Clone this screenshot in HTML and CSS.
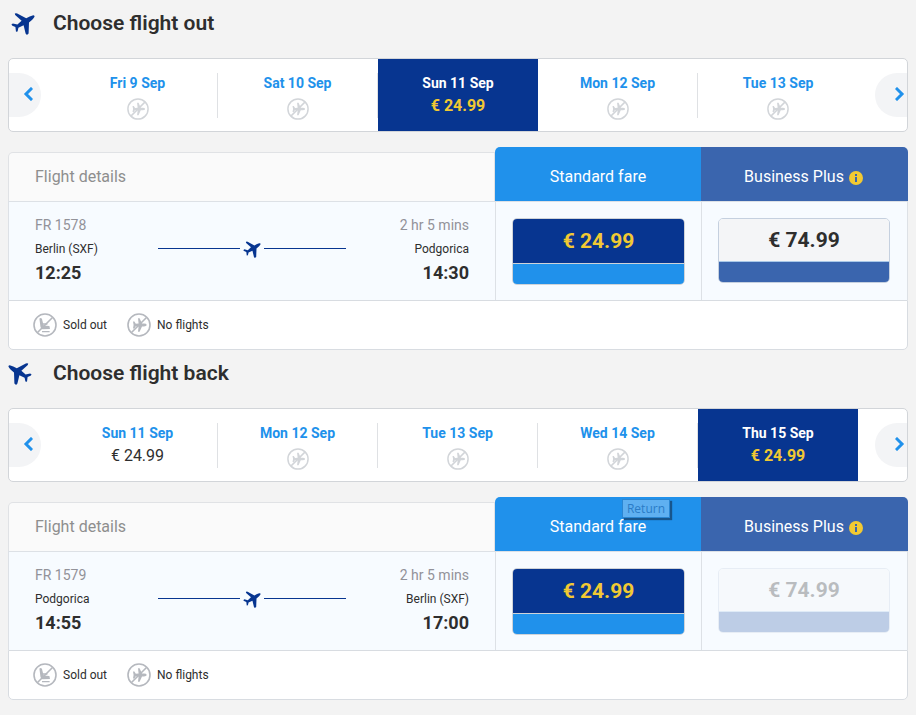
FILE: index.html
```html
<!DOCTYPE html>
<html lang="en">
<head>
    <meta charset="UTF-8">
    <meta name="viewport" content="width=device-width, initial-scale=1.0">
    <title>Choose flights</title>
    <link rel="stylesheet" href="styles.css">
</head>
<body>
    <!-- shared icons -->
    <svg class="sprite" aria-hidden="true">
        <symbol id="plane" viewBox="0 0 24 24">
            <path d="M23.6 5.4Q23.4 4.2 21.6 4.4Q19 4.8 15.2 7.2L6.2 2.4Q4.8 1.8 3.8 2.6L4.2 4L10.6 9.8L6.4 13.6L1.8 12.4L.4 13.6L1.4 14.8L4.4 16L5 20.8L6.6 20.4L7.4 16.8L12.6 14.2L14.6 22.6Q15.2 23.8 16.2 23.8L17.6 22.6L18 11.4Q22.6 8 23.6 5.4Z"/>
        </symbol>
        <symbol id="no-flights" viewBox="0 0 24 24">
            <circle cx="12" cy="12" r="11" fill="none" stroke="currentColor" stroke-width="1.6"/>
            <path d="M4.5 19.5L19.5 4.5" fill="none" stroke="currentColor" stroke-width="1.6"/>
            <path fill="currentColor" d="M19.8 12Q19.4 10.6 17 10.6L15 10.6L12.6 5.2L11 5.2L11.6 10.6L8.8 10.8L7.4 8.6L6 8.6L6.6 12L6 15.4L7.4 15.4L8.8 13.2L11.6 13.4L11 18.8L12.6 18.8L15 13.4L17 13.4Q19.4 13.4 19.8 12Z"/>
        </symbol>
        <symbol id="sold-out" viewBox="0 0 24 24">
            <circle cx="12" cy="12" r="11" fill="none" stroke="currentColor" stroke-width="1.6"/>
            <path d="M4.5 19.5L19.5 4.5" fill="none" stroke="currentColor" stroke-width="1.6"/>
            <path fill="currentColor" d="M6.4 5.6Q8 4.4 9 6L10.6 12.6L16.4 13L17 16L9.4 16.2Q7.6 15.8 7.4 13.6Z"/>
            <path d="M10 11H14.4M9 18.6H16.6" fill="none" stroke="currentColor" stroke-width="1.4"/>
        </symbol>
    </svg>

    <!-- outbound flight -->
    <section class="flight">
        <h2 class="title">
            <svg class="title_icon"><use href="#plane"/></svg>
            Choose flight out
        </h2>

        <div class="dates">
            <button class="arrow arrow_left" type="button" aria-label="Previous days">
                <svg viewBox="0 0 10 14"><path d="M8 2L3 7L8 12"/></svg>
            </button>
            <button class="date" type="button">
                <span class="day">Fri 9 Sep</span>
                <svg class="none"><use href="#no-flights"/></svg>
            </button>
            <button class="date" type="button">
                <span class="day">Sat 10 Sep</span>
                <svg class="none"><use href="#no-flights"/></svg>
            </button>
            <button class="date active" type="button">
                <span class="day">Sun 11 Sep</span>
                <span class="from">€ 24.99</span>
            </button>
            <button class="date" type="button">
                <span class="day">Mon 12 Sep</span>
                <svg class="none"><use href="#no-flights"/></svg>
            </button>
            <button class="date" type="button">
                <span class="day">Tue 13 Sep</span>
                <svg class="none"><use href="#no-flights"/></svg>
            </button>
            <button class="arrow arrow_right" type="button" aria-label="Next days">
                <svg viewBox="0 0 10 14"><path d="M2 2L7 7L2 12"/></svg>
            </button>
        </div>

        <div class="fares">
            <div class="head head_details">Flight details</div>
            <div class="head head_standard">Standard fare</div>
            <div class="head head_business">
                Business Plus
                <svg class="info" viewBox="0 0 14 14"><circle cx="7" cy="7" r="7"/><path d="M6 3H8V5H6ZM6 6H8V11H6Z"/></svg>
            </div>

            <div class="details">
                <div class="stop">
                    <span class="grey">FR 1578</span>
                    <span class="city">Berlin (SXF)</span>
                    <strong class="time">12:25</strong>
                </div>
                <div class="route"><svg><use href="#plane"/></svg></div>
                <div class="stop stop_to">
                    <span class="grey">2 hr 5 mins</span>
                    <span class="city">Podgorica</span>
                    <strong class="time">14:30</strong>
                </div>
            </div>
            <div class="fare">
                <button class="price price_standard" type="button"><span>€ 24.99</span></button>
            </div>
            <div class="fare">
                <button class="price price_business" type="button"><span>€ 74.99</span></button>
            </div>

            <ul class="legend">
                <li><svg><use href="#sold-out"/></svg>Sold out</li>
                <li><svg><use href="#no-flights"/></svg>No flights</li>
            </ul>
        </div>
    </section>

    <!-- return flight -->
    <section class="flight flight_back">
        <h2 class="title">
            <svg class="title_icon"><use href="#plane"/></svg>
            Choose flight back
        </h2>

        <div class="dates">
            <button class="arrow arrow_left" type="button" aria-label="Previous days">
                <svg viewBox="0 0 10 14"><path d="M8 2L3 7L8 12"/></svg>
            </button>
            <button class="date" type="button">
                <span class="day">Sun 11 Sep</span>
                <span class="from">€ 24.99</span>
            </button>
            <button class="date" type="button">
                <span class="day">Mon 12 Sep</span>
                <svg class="none"><use href="#no-flights"/></svg>
            </button>
            <button class="date" type="button">
                <span class="day">Tue 13 Sep</span>
                <svg class="none"><use href="#no-flights"/></svg>
            </button>
            <button class="date" type="button">
                <span class="day">Wed 14 Sep</span>
                <svg class="none"><use href="#no-flights"/></svg>
            </button>
            <button class="date active" type="button">
                <span class="day">Thu 15 Sep</span>
                <span class="from">€ 24.99</span>
            </button>
            <button class="arrow arrow_right" type="button" aria-label="Next days">
                <svg viewBox="0 0 10 14"><path d="M2 2L7 7L2 12"/></svg>
            </button>
        </div>

        <div class="fares">
            <div class="head head_details">Flight details</div>
            <div class="head head_standard">
                Standard fare
                <span class="tip" role="tooltip">Return</span>
            </div>
            <div class="head head_business">
                Business Plus
                <svg class="info" viewBox="0 0 14 14"><circle cx="7" cy="7" r="7"/><path d="M6 3H8V5H6ZM6 6H8V11H6Z"/></svg>
            </div>

            <div class="details">
                <div class="stop">
                    <span class="grey">FR 1579</span>
                    <span class="city">Podgorica</span>
                    <strong class="time">14:55</strong>
                </div>
                <div class="route"><svg><use href="#plane"/></svg></div>
                <div class="stop stop_to">
                    <span class="grey">2 hr 5 mins</span>
                    <span class="city">Berlin (SXF)</span>
                    <strong class="time">17:00</strong>
                </div>
            </div>
            <div class="fare">
                <button class="price price_standard" type="button"><span>€ 24.99</span></button>
            </div>
            <div class="fare">
                <button class="price price_business" type="button" disabled><span>€ 74.99</span></button>
            </div>

            <ul class="legend">
                <li><svg><use href="#sold-out"/></svg>Sold out</li>
                <li><svg><use href="#no-flights"/></svg>No flights</li>
            </ul>
        </div>
    </section>
</body>
</html>
```
FILE: styles.css
```css
*{
    margin: 0;
    padding: 0;
    box-sizing: border-box;
}
body{
    padding: 0 8px;
    background: #f3f3f3;
    color: #2e2e2e;
    font-family: Roboto, "Liberation Sans", sans-serif;
}
button{
    border: 0;
    background: none;
    color: inherit;
    font-family: inherit;
    cursor: pointer;
}
li{
    list-style: none;
}
.sprite{
    display: none;
}

/* title */
.title{
    display: flex;
    align-items: center;
    gap: 18px;
    height: 58px;
    padding: 0 0 12px 3px;
    font-size: 21px;
    font-weight: 600;
}
.title_icon{
    width: 24px;
    height: 24px;
    fill: #073590;
}
.flight_back .title{
    gap: 21px;
    padding-left: 0;
}
.flight_back .title_icon{
    transform: scaleX(-1);
}

/* dates */
.dates{
    display: grid;
    grid-template-columns: 49px repeat(5, minmax(0, 1fr)) 49px;
    align-items: center;
    height: 74px;
    border: 1px solid #d2d5d9;
    border-radius: 5px;
    background: #fff;
    overflow: hidden;
}
.arrow{
    display: flex;
    align-items: center;
    width: 32px;
    height: 44px;
    padding-bottom: 2px;
    background: #f3f4f6;
}
.arrow svg{
    width: 10px;
    height: 14px;
    fill: none;
    stroke: #2091eb;
    stroke-width: 3;
    stroke-linecap: square;
}
.arrow_left{
    padding-left: 14px;
    border-radius: 0 22px 22px 0;
}
.arrow_right{
    justify-self: end;
    padding-left: 20px;
    border-radius: 22px 0 0 22px;
}
.date{
    display: flex;
    flex-direction: column;
    align-items: center;
    height: 45px;
    line-height: 20px;
    border-right: 1px solid #dfe1e4;
}
.date:nth-child(6){
    border-right: 0;
}
.day{
    color: #2091eb;
    font-size: 14px;
    font-weight: 700;
}
.from{
    padding-top: 3px;
    font-size: 16px;
}
.none{
    width: 22px;
    height: 22px;
    margin-top: 5px;
    color: #d2d5d9;
    flex-shrink: 0;
}
.date.active{
    height: 100%;
    padding-top: 14px;
    border: 0;
    background: #073590;
}
.active .day{
    color: #fff;
}
.active .from{
    color: #f1c933;
    font-weight: 700;
}

/* fares */
.fares{
    display: grid;
    grid-template-columns: 487fr 206fr 207fr;
    margin-top: 15px;
}
.head{
    display: flex;
    align-items: center;
    justify-content: center;
    height: 54px;
    padding-top: 5px;
    color: #fff;
    font-size: 16px;
}
.head_details{
    justify-content: flex-start;
    height: 49px;
    margin-top: 5px;
    padding: 0 26px 2px;
    border: 1px solid #e0e2e5;
    border-bottom: 0;
    border-radius: 5px 0 0 0;
    background: #fafafa;
    color: #8e8e8e;
}
.head_standard{
    position: relative;
    border-radius: 5px 0 0 0;
    background: #2091eb;
}
.head_business{
    gap: 5px;
    padding-right: 2px;
    border-radius: 0 5px 0 0;
    background: #3a65ae;
}
.info{
    width: 14px;
    height: 14px;
    margin-top: 2px;
    fill: #f1c933;
}
.info path{
    fill: #3a65ae;
}
.tip{
    position: absolute;
    top: 2px;
    right: 31px;
    padding: 0 4px;
    border: 1px solid #2a86d2;
    background: #5fb0f1;
    box-shadow: 2px 2px 1px #17558c;
    color: #2a7cc7;
    font-family: "Open Sans", sans-serif;
    font-size: 12px;
    line-height: 17px;
}
.details,.fare{
    height: 99px;
    border: 1px solid #dde1e6;
    border-right: 0;
    border-bottom: 0;
    background: #f7fbff;
}
.fare{
    padding: 16px;
}
.fare:nth-child(6){
    padding-right: 17px;
    border-right: 1px solid #dde1e6;
}
.details{
    display: grid;
    grid-template-columns: 123fr 188fr 123fr;
    padding: 11px 26px;
}
.stop{
    display: flex;
    flex-direction: column;
    line-height: 24px;
    white-space: nowrap;
}
.stop_to{
    text-align: right;
}
.grey{
    color: #929299;
    font-size: 14px;
}
.city{
    font-size: 12px;
}
.time{
    font-size: 18px;
    font-weight: 700;
}
.route{
    display: flex;
    align-items: center;
    gap: 3px;
    height: 20px;
    margin-top: 26px;
}
.route::before,.route::after{
    content: "";
    flex: 1;
    height: 1px;
    margin-bottom: 2px;
    background: #073590;
}
.route svg{
    width: 18px;
    height: 18px;
    fill: #073590;
}
.price{
    display: block;
    width: 100%;
    border: 1px solid #cfd3d8;
    border-radius: 5px;
    overflow: hidden;
    font-size: 21px;
    font-weight: 700;
}
.price span{
    display: block;
    line-height: 42px;
    background: #f4f5f7;
}
.price::after{
    content: "";
    display: block;
    height: 20px;
    border-top: 1px solid #cfd3d8;
    background: #2091eb;
}
.price_standard{
    color: #f1c933;
}
.price_standard span{
    line-height: 44px;
    background: #073590;
}
.price_business{
    border-color: #c5d0df;
}
.price_business::after{
    border-color: #a9c8e8;
    background: #3a65ae;
}
.price:disabled{
    color: #2e2e2e;
    opacity: .3;
    cursor: default;
}

/* legend */
.legend{
    grid-column: 1 / -1;
    display: flex;
    align-items: center;
    gap: 20px;
    height: 50px;
    padding-left: 24px;
    border: 1px solid #d8dce1;
    border-radius: 0 0 5px 5px;
    background: #fff;
    font-size: 12px;
}
.legend li{
    display: flex;
    align-items: center;
    gap: 6px;
}
.legend svg{
    width: 24px;
    height: 24px;
    color: #b5b8be;
}
```
